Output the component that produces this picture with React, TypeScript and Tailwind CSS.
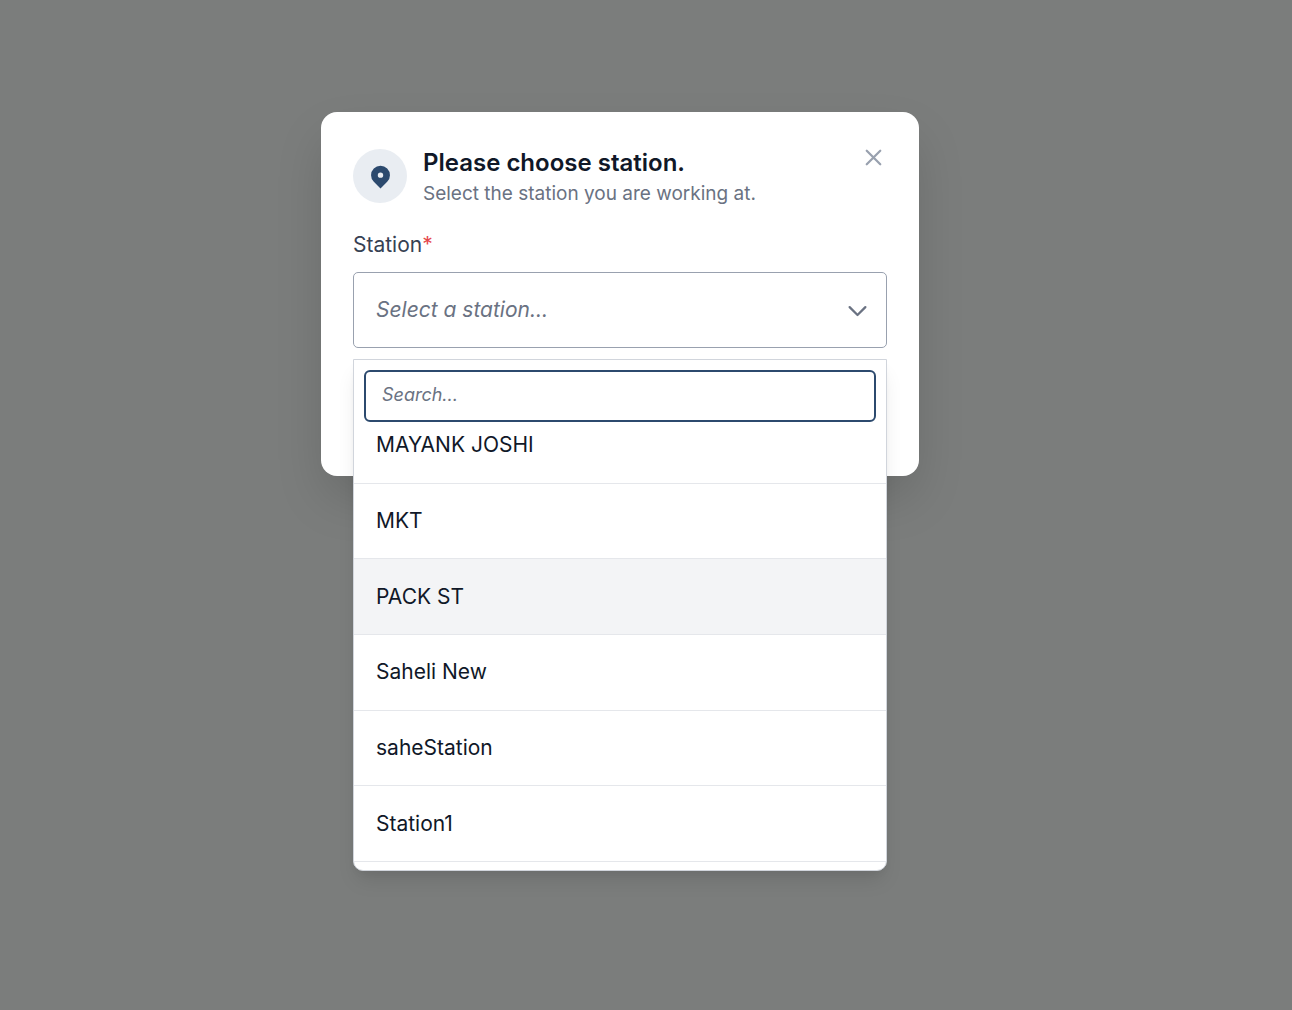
import { useState } from 'react';
import { clsx } from 'clsx';
import { HiLocationMarker, HiOutlineChevronDown, HiOutlineX } from 'react-icons/hi';

const STATIONS = ['MAYANK JOSHI', 'MKT', 'PACK ST', 'Saheli New', 'saheStation', 'Station1'];

interface StationMenuProps {
  active: string;
  onActivate: (station: string) => void;
}

function StationMenu({ active, onActivate }: StationMenuProps) {
  const [query, setQuery] = useState('');
  const stations = STATIONS.filter((s) => s.toLowerCase().includes(query.toLowerCase()));

  return (
    <div className="absolute inset-x-0 top-full mt-[11px] overflow-hidden rounded-b-[10px] border border-gray-300 bg-white pb-2 shadow-[0_13px_20px_-4px_rgba(0,0,0,0.1),0_4px_8px_-3px_rgba(0,0,0,0.06)]">
      <div className="relative z-10 px-2.5 pt-2.5">
        <input
          type="text"
          aria-label="Search stations"
          placeholder="Search..."
          value={query}
          onChange={(e) => setQuery(e.target.value)}
          className="block h-[52px] w-full rounded-md border-2 border-[#2c4a6e] bg-white px-4 pb-1 text-lg text-gray-900 outline-none placeholder:italic placeholder:text-gray-500"
        />
      </div>
      {/* the first row slides under the search box */}
      <ul id="station-list" role="listbox" aria-label="Stations" className="-mt-3.5 grid h-[454px] grid-rows-6">
        {stations.map((station) => (
          <li
            key={station}
            role="option"
            aria-selected={station === active}
            className={clsx('border-b border-gray-200', station === active && 'bg-gray-100')}
          >
            <button
              type="button"
              onClick={() => onActivate(station)}
              className="flex h-full w-full items-center px-[22px] text-left text-[21px] leading-8 text-gray-900"
            >
              {station}
            </button>
          </li>
        ))}
      </ul>
    </div>
  );
}

export default function App() {
  const [open, setOpen] = useState(true);
  const [active, setActive] = useState('PACK ST');

  return (
    <div className="flex min-h-screen items-start justify-center bg-[#7b7d7c] pt-28 pr-[52px] font-['Inter',sans-serif]">
      <div
        role="dialog"
        aria-labelledby="station-title"
        className="w-full max-w-[598px] rounded-2xl bg-white px-8 pt-[33px] pb-32 shadow-[0_24px_50px_-4px_rgba(0,0,0,0.15)]"
      >
        <div className="flex items-start">
          <div className="mt-1 flex size-[54px] shrink-0 items-center justify-center rounded-full bg-[#e9edf2]">
            <HiLocationMarker className="size-[27px] text-[#2c4a6e]" />
          </div>
          <div className="ml-4 flex-1">
            <h2 id="station-title" className="text-2xl leading-9 font-semibold text-gray-900">
              Please choose station.
            </h2>
            <p className="text-[19px] leading-[25px] text-gray-500">Select the station you are working at.</p>
          </div>
          <button type="button" aria-label="Close" className="flex h-[25px] w-[27px] items-center justify-center text-gray-400">
            <HiOutlineX className="size-[27px]" />
          </button>
        </div>

        <label htmlFor="station" className="mt-[23px] block text-[21px] leading-8 text-gray-700">
          Station<span className="text-[#e5484d]">*</span>
        </label>
        <div className="relative mt-[11px]">
          <button
            id="station"
            type="button"
            aria-haspopup="listbox"
            aria-expanded={open}
            onClick={() => setOpen(!open)}
            className="flex h-[76px] w-full items-center justify-between rounded-[5px] border border-gray-400 bg-white pr-[15px] pl-[22px] text-[21px] leading-8 text-gray-500 italic"
          >
            Select a station...
            <HiOutlineChevronDown className="size-[27px]" />
          </button>
          {open && <StationMenu active={active} onActivate={setActive} />}
        </div>
      </div>
    </div>
  );
}
